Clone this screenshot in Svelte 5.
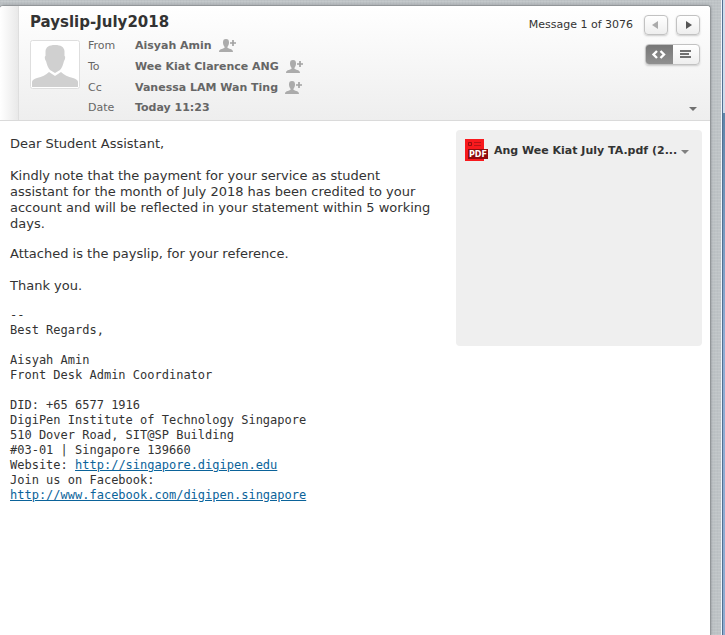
<script>
  const people = [
    { label: 'From', name: 'Aisyah Amin' },
    { label: 'To', name: 'Wee Kiat Clarence ANG' },
    { label: 'Cc', name: 'Vanessa LAM Wan Ting' }
  ];
  let view = $state('html');
</script>

<div class="window">
  <article class="message">
    <header>
      <div class="rail"></div>
      <div class="summary">
        <h1>Payslip-July2018</h1>
        <div class="details">
          <svg class="avatar" viewBox="0 0 50 50" aria-hidden="true">
            <rect x="0.5" y="0.5" width="49" height="48" rx="2" fill="#fff" stroke="#dedede" />
            <path d="M25 5c-6 0-9 2-9.500 6v5c-1 0-1 3 .5 5 1 4 2 7 4 9l5 3 5-3c2-2 3-5 4-9 1.500-2 1.500-5 .5-5v-5c-.5-4-3.500-6-9.500-6z" fill="#d0d0d0" />
            <path d="M2 47v-5c0-2 2-3 5-4 5-1 9-3 12-6l6 4 6-4c3 3 7 5 12 6 3 1 5 2 5 4v5z" fill="#d0d0d0" />
          </svg>
          <dl>
            {#each people as person}
              <div class="row">
                <dt>{person.label}</dt>
                <dd>
                  {person.name}
                  <button class="add" aria-label="Add {person.name} to contacts">
                    <svg width="18" height="14" viewBox="0 0 18 14">
                      <path d="M7 0C4.800 0 4 1 4 3.500c0 2 .8 3.500 1.500 4.300V9C3 10 0 10 0 13h14c0-3-3-3-5.500-4V7.800c.7-.8 1.500-2.300 1.500-4.300C10 1 9.200 0 7 0z" fill="#ababab" />
                      <path d="M11 4h6M14 1v6" stroke="#a3a3a3" stroke-width="1.700" />
                    </svg>
                  </button>
                </dd>
              </div>
            {/each}
            <div class="row date"><dt>Date</dt><dd>Today 11:23</dd></div>
          </dl>
        </div>
      </div>
      <div class="tools">
        <nav aria-label="Messages">
          <span>Message 1 of 3076</span>
          <button class="step" aria-label="Previous message">
            <svg width="22" height="18" viewBox="0 0 22 18"><path d="M13 5v8l-6-4z" fill="#aaa" /></svg>
          </button>
          <button class="step" aria-label="Next message">
            <svg width="22" height="18" viewBox="0 0 22 18"><path d="M9 5v8l6-4z" fill="#555" /></svg>
          </button>
        </nav>
        <div class="views">
          <button class:active={view === 'html'} aria-label="HTML view" onclick={() => (view = 'html')}>
            <svg width="27" height="19" viewBox="0 0 27 19"><path d="M11 6L7.500 9.500 11 13M14.500 6L18 9.500 14.500 13" fill="none" stroke="#fff" stroke-width="2.400" /></svg>
          </button>
          <button class:active={view === 'text'} aria-label="Plain text view" onclick={() => (view = 'text')}>
            <svg width="26" height="19" viewBox="0 0 26 19"><path d="M7 6h11M7 9h9M7 12h11" stroke="#444" stroke-width="1.700" /></svg>
          </button>
        </div>
        <button class="more" aria-label="Show all headers">
          <svg width="8" height="5" viewBox="0 0 8 5"><path d="M0 0h8L4 4z" fill="#707070" /></svg>
        </button>
      </div>
    </header>

    <div class="content">
      <div class="text">
        <p>Dear Student Assistant,</p>
        <p>Kindly note that the payment for your service as student<br />assistant for the month of July 2018 has been credited to your<br />account and will be reflected in your statement within 5 working<br />days.</p>
        <p class="attached">Attached is the payslip, for your reference.</p>
        <p>Thank you.</p>
        <div class="signature">--<br />Best Regards,<br /><br />Aisyah Amin<br />Front Desk Admin Coordinator<br /><br />DID: +65 6577 1916<br />DigiPen Institute of Technology Singapore<br />510 Dover Road, SIT@SP Building<br />#03-01 | Singapore 139660<br />Website: <a href="http://singapore.digipen.edu">http://singapore.digipen.edu</a><br />Join us on Facebook:<br /><a href="http://www.facebook.com/digipen.singapore">http://www.facebook.com/digipen.singapore</a></div>
      </div>
      <aside aria-label="Attachments">
        <svg width="23" height="23" viewBox="0 0 23 23" aria-hidden="true">
          <path d="M0 0h19v22H0z" fill="#f8191d" />
          <path d="M3.500 3.500h3v3h-3z" fill="none" stroke="#970d10" />
          <path d="M9 3.500h7M9 6.500h7" stroke="#b81417" />
          <path d="M3 10h20v10H3z" fill="#8f0b0e" />
          <text x="4" y="18" font-size="8" font-weight="bold" fill="#fff">PDF</text>
        </svg>
        <a class="file" href="#attachment">Ang Wee Kiat July TA.pdf (2...</a>
        <button class="more" aria-label="Attachment options">
          <svg width="8" height="5" viewBox="0 0 8 5"><path d="M0 0h8L4 4z" fill="#808080" /></svg>
        </button>
      </aside>
    </div>
  </article>
  <div class="edge"></div>
</div>

<style>
  .window {
    display: flex;
    box-sizing: border-box;
    min-height: 100vh;
    background-color: #bec3c6;
    background-image: repeating-linear-gradient(0deg, #ffffff18 0 1px, transparent 1px 3px),
      repeating-linear-gradient(90deg, #00000005 0 1px, transparent 1px 3px);
    font: 11px/16px Verdana, "DejaVu Sans", sans-serif;
    color: #333;
  }
  .message {
    flex: 1;
    min-width: 0;
    margin-top: 5px;
    border: solid #929699;
    border-width: 1px 1px 0 0;
    border-radius: 4px 4px 0 0;
    background: #fff;
    box-shadow: 0 0 3px #8d9296;
    overflow: hidden;
  }
  .edge {
    width: 3px;
    margin-left: 10px;
    border-left: 1px solid #eef4fa;
    background: linear-gradient(#cfdceb 0 113px, #5f86aa 113px, #90add4 340px, #8eabd0);
    box-shadow: inset 1px 0 #506f91;
  }
  header {
    display: flex;
    height: 114px;
    border-bottom: 1px solid #dadada;
    background: linear-gradient(#fff, #eee);
  }
  .rail {
    width: 18px;
    border-right: 1px solid #dedede;
    background: linear-gradient(90deg, #fff, #e9e9e9);
  }
  .summary {
    flex: 1;
    padding: 6px 0 0 11px;
  }
  h1 {
    margin: 0;
    font-size: 15px;
    line-height: 20px;
  }
  .details {
    display: flex;
    gap: 8px;
    padding-top: 3px;
  }
  .avatar {
    width: 50px;
    height: 50px;
    margin-top: 5px;
  }
  dl {
    margin: 0;
    color: #666;
  }
  .row {
    display: flex;
    height: 21px;
    align-items: center;
  }
  .row.date {
    height: 19px;
  }
  dt {
    width: 47px;
  }
  dd {
    display: flex;
    gap: 7px;
    margin: 0;
    font-weight: bold;
  }
  button {
    padding: 0;
    border: 0;
    background: none;
  }
  button svg {
    display: block;
  }
  .tools {
    display: flex;
    flex-direction: column;
    align-items: flex-end;
    padding: 9px 10px 8px 0;
  }
  nav {
    display: flex;
    align-items: center;
    gap: 8px;
  }
  nav span {
    margin-right: 3px;
  }
  .step,
  .views {
    border: 1px solid #c2c2c2;
    border-radius: 4px;
    background: linear-gradient(#fff, #eee);
    box-shadow: 0 1px 2px #ccc;
  }
  .views {
    display: flex;
    margin: 9px 0;
    overflow: hidden;
  }
  .views .active {
    background: linear-gradient(#777, #909090);
  }
  .tools .more {
    margin-top: auto;
    margin-right: 3px;
  }
  .content {
    display: flex;
    align-items: flex-start;
    gap: 10px;
    padding: 9px 8px 0 10px;
  }
  .text {
    flex: 1;
    min-width: 0;
    padding-top: 6px;
    font-size: 13px;
  }
  p {
    margin: 0 0 16px;
  }
  .attached {
    margin-top: -2px;
  }
  .signature {
    margin-top: -2px;
    font: 12px/15px "DejaVu Sans Mono", monospace;
  }
  .signature a {
    color: #0b639a;
  }
  aside {
    display: flex;
    align-items: flex-start;
    box-sizing: border-box;
    width: 34%;
    min-width: 246px;
    height: 216px;
    padding: 9px;
    border-radius: 4px;
    background: #efefef;
  }
  .file {
    margin: 4px 4px 0 6px;
    font-weight: bold;
    color: #333;
    text-decoration: none;
    white-space: nowrap;
  }
  aside .more {
    margin-top: 11px;
  }
</style>
